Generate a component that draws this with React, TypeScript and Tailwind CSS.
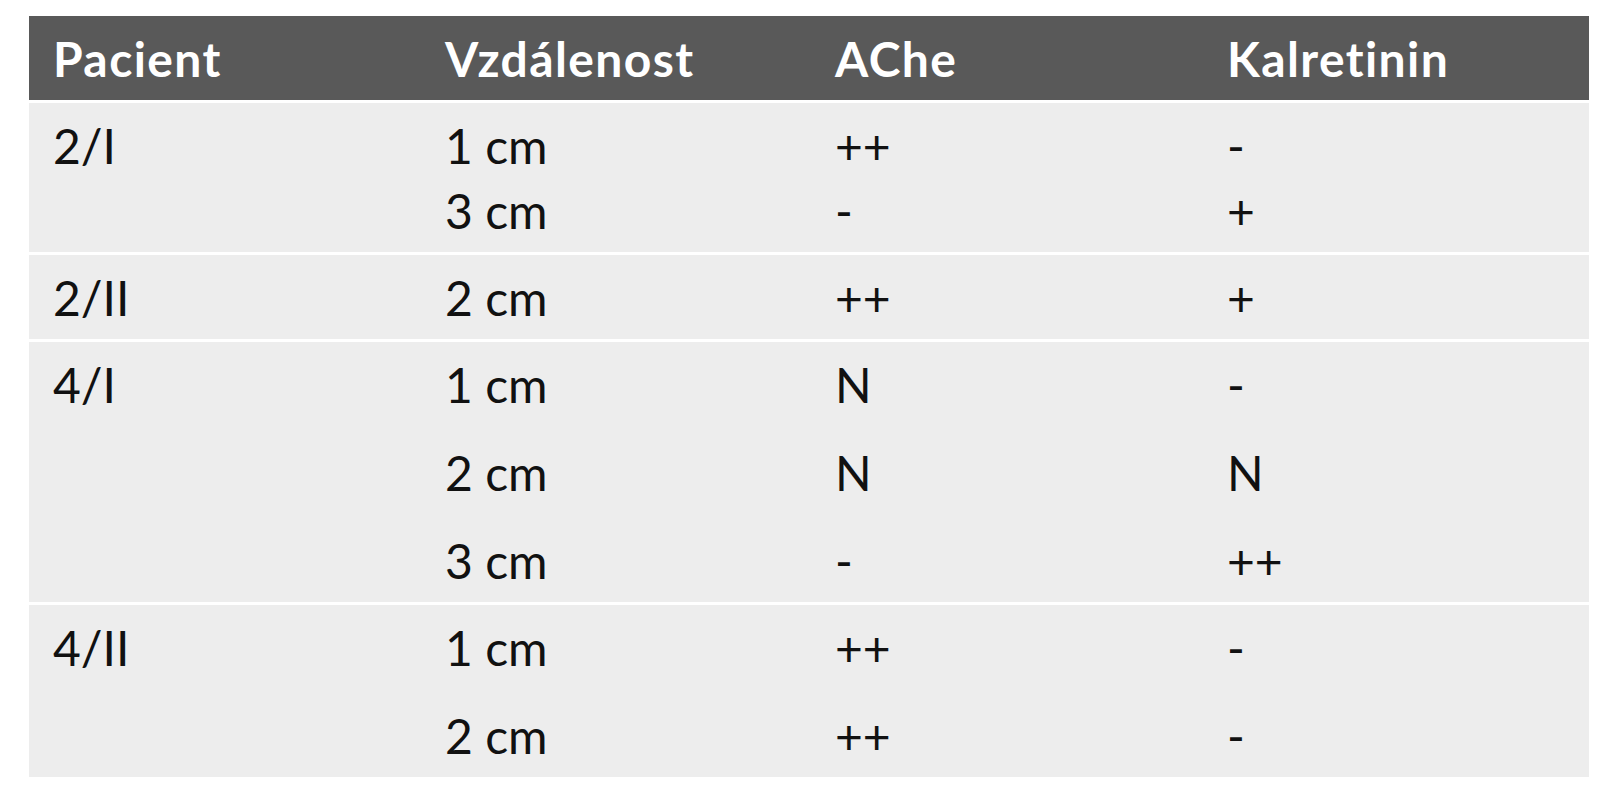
const rows = [
  {
    pacient: "2/I",
    gap: "gap-[17px]",
    lines: [
      ["1 cm", "++", "-"],
      ["3 cm", "-", "+"],
    ],
  },
  {
    pacient: "2/II",
    gap: "gap-[17px]",
    lines: [["2 cm", "++", "+"]],
  },
  {
    pacient: "4/I",
    gap: "gap-[40px]",
    lines: [
      ["1 cm", "N", "-"],
      ["2 cm", "N", "N"],
      ["3 cm", "-", "++"],
    ],
  },
  {
    pacient: "4/II",
    gap: "gap-[40px]",
    lines: [
      ["1 cm", "++", "-"],
      ["2 cm", "++", "-"],
    ],
  },
];

const headers = ["Pacient", "Vzdálenost", "AChe", "Kalretinin"];

export default function App() {
  return (
    <div className="min-h-screen bg-white pt-4 pl-[29px] font-['Lato',sans-serif] [font-variant-ligatures:none]">
      <div className="flex w-[1560px] flex-col gap-[3px] bg-white">
        {/* Header */}
        <div className="grid grid-cols-[392px_390px_392px_1fr] bg-[#595959] pt-[19px] pb-[17px] text-[48px] font-bold leading-[48px] tracking-[1.4px] text-white">
          {headers.map((h) => (
            <div key={h} className="pl-6">
              {h}
            </div>
          ))}
        </div>

        {/* Body */}
        {rows.map((row) => (
          <div
            key={row.pacient}
            className="grid grid-cols-[392px_390px_392px_1fr] bg-[#ededed] pt-[19px] pb-[17px] text-[48px] leading-[48px] text-[#111]"
          >
            <div className="pl-6">{row.pacient}</div>
            {[0, 1, 2].map((col) => (
              <div key={col} className={`flex flex-col pl-6 ${row.gap}`}>
                {row.lines.map((line, i) => (
                  <div key={i}>{line[col]}</div>
                ))}
              </div>
            ))}
          </div>
        ))}
      </div>
    </div>
  );
}
